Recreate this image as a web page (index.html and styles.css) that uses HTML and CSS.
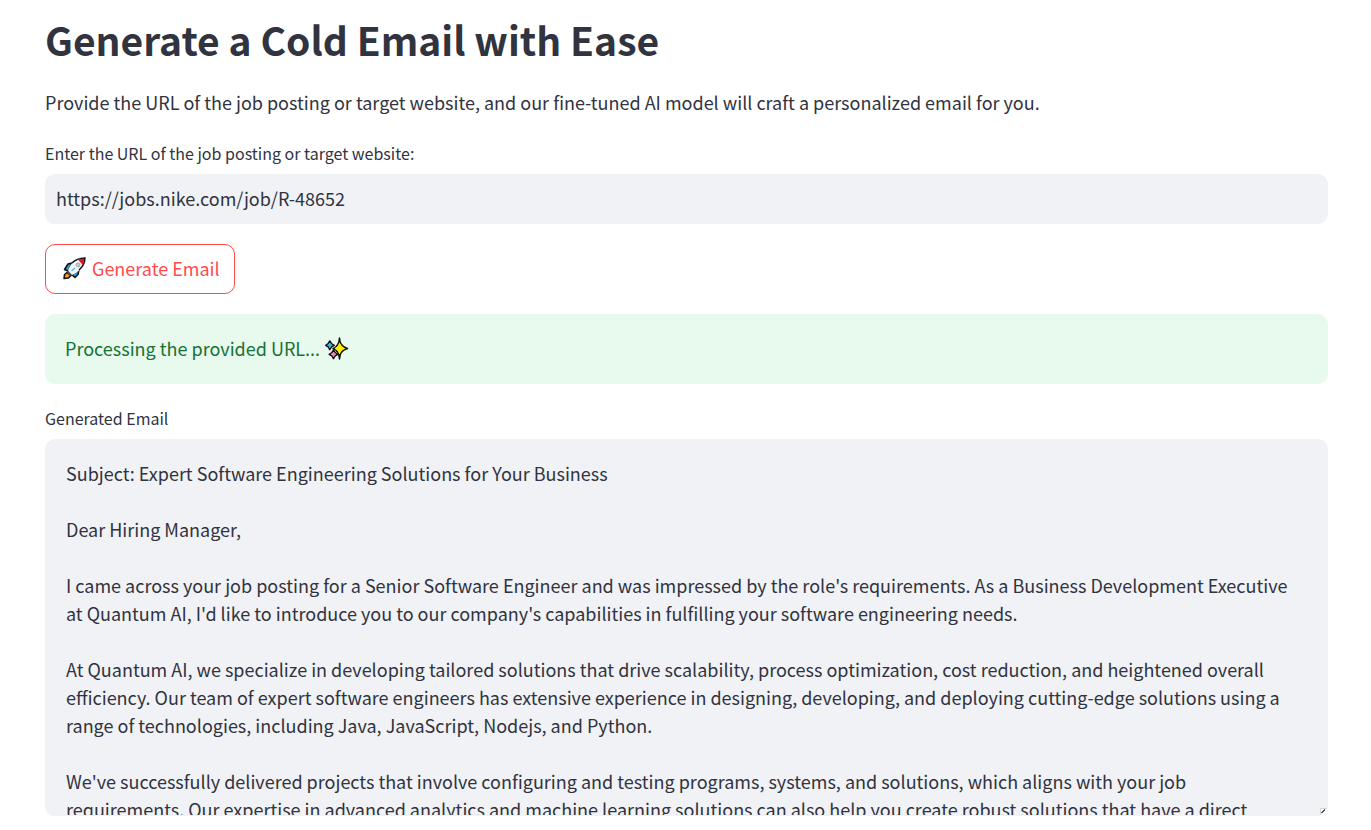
FILE: index.html
```html
<!DOCTYPE html>
<html lang="en">
<head>
<meta charset="utf-8">
<title>Generate a Cold Email with Ease</title>
<link rel="stylesheet" href="styles.css">
</head>
<body>
<main class="page">
  <h1 class="title">Generate a Cold Email with Ease</h1>
  <p class="intro">Provide the URL of the job posting or target website, and our fine-tuned AI model will craft a personalized email for you.</p>
  <div class="field">
    <label class="label" for="url">Enter the URL of the job posting or target website:</label>
    <input class="input" id="url" type="text" value="https://jobs.nike.com/job/R-48652">
  </div>
  <button class="button" type="button">
    <svg class="emoji" viewBox="0 0 24 24" aria-hidden="true">
      <path d="M5 16.500 L2.500 18.500 L2 22.500 L6.500 22 L9 19.500Z" fill="#f7941d" stroke="#111" stroke-width="1.500" stroke-linejoin="round"/>
      <path d="M10 7 L6 8 L2.500 13.500 L6 15Z M17 13.500 L16 18.500 L13 21.500 L10 19Z" fill="#1ba1e2" stroke="#111" stroke-width="1.500" stroke-linejoin="round"/>
      <path d="M6 14.500 C8 8 13 2.500 23 2 C22.500 10 17 16 10 19Z" fill="#f4f8fb"/>
      <path d="M10 7 C13 4 17 2.200 23 2 C22.800 7 20.500 11 17 14" stroke="#111" stroke-width="1.500" stroke-linejoin="round"/>
      <path d="M16 3.600 Q19 2.700 22.300 2.700 Q22 6.500 20.700 9Z" fill="#e81224"/>
      <path d="M6 14.500 L10 19 L7.500 20 L5 16.500Z" fill="#444"/>
      <path d="M9.500 15 L13 12" stroke="#45b5e8" stroke-width="1.200"/>
      <circle cx="16" cy="9" r="2" fill="#c8cdd0" stroke="#a4a9ac" stroke-width="1"/>
    </svg>
    <span>Generate Email</span>
  </button>
  <div class="alert" role="status">
    <span>Processing the provided URL...</span>
    <svg class="emoji" viewBox="0 0 24 24" aria-hidden="true">
      <g stroke="#111" stroke-width="1.500" stroke-linejoin="round">
        <path d="M14.500 2 Q14.800 10.500 22.500 12.500 Q14.800 14.500 14.500 23 Q14 14.500 8 12.500 Q14 10.500 14.500 2Z" fill="#ffed00"/>
        <path d="M4.800 5 L6.400 7.700 L9.200 9.300 L6.400 10.900 L4.800 13.600 L3.200 10.900 L.8 9.300 L3.200 7.700Z" fill="#35c2f1"/>
        <path d="M8.500 14 L10.100 16.700 L12.800 18.300 L10.100 19.900 L8.500 22.600 L6.900 19.900 L4.200 18.300 L6.900 16.700Z" fill="#f589b8"/>
      </g>
      <path d="M14.500 7.500 Q15.500 11.800 19.500 12.500 Q15.500 13.200 14.500 17.500 Q13.500 13.200 10 12.500 Q13.500 11.800 14.500 7.500Z" fill="#ffed00" stroke="#ffed00" stroke-width="1"/>
      <path d="M4.800 7 V11.600 M2.700 9.300 H7" stroke="#35c2f1" stroke-width="1.500"/>
      <path d="M8.500 16 V20.600 M6.300 18.300 H10.700" stroke="#f589b8" stroke-width="1.500"/>
    </svg>
  </div>
  <div class="field">
    <label class="label" for="email">Generated Email</label>
    <textarea class="textarea" id="email" rows="12">Subject: Expert Software Engineering Solutions for Your Business

Dear Hiring Manager,

I came across your job posting for a Senior Software Engineer and was impressed by the role's requirements. As a Business Development Executive at Quantum AI, I'd like to introduce you to our company's capabilities in fulfilling your software engineering needs.

At Quantum AI, we specialize in developing tailored solutions that drive scalability, process optimization, cost reduction, and heightened overall efficiency. Our team of expert software engineers has extensive experience in designing, developing, and deploying cutting-edge solutions using a range of technologies, including Java, JavaScript, Nodejs, and Python.

We've successfully delivered projects that involve configuring and testing programs, systems, and solutions, which aligns with your job requirements. Our expertise in advanced analytics and machine learning solutions can also help you create robust solutions that have a direct</textarea>
  </div>
</main>
</body>
</html>
```

FILE: styles.css
```css
* {
  box-sizing: border-box;
}

body {
  margin: 0;
  background: #fff;
  color: #31333f;
  font-family: "Source Sans Pro", "Noto Sans CJK SC", "Noto Sans", sans-serif;
  font-size: 18px;
  line-height: 28px;
}

.page {
  display: flex;
  flex-direction: column;
  align-items: stretch;
  gap: 20px;
  padding: 14px 43px 14px 45px;
}

.title {
  margin: 0;
  padding-bottom: 4px;
  font-size: 39px;
  font-weight: 600;
  line-height: 50px;
}

.intro {
  margin: 0;
  padding-bottom: 3px;
}

.field {
  display: flex;
  flex-direction: column;
}

.label {
  padding-bottom: 7px;
  font-size: 16px;
  line-height: 28px;
}

.input,
.textarea {
  width: 100%;
  margin: 0;
  border: 1px solid #f0f2f6;
  border-radius: 10px;
  background: #f0f2f6;
  color: inherit;
  font: inherit;
  outline: none;
}

.input {
  height: 50px;
  padding: 0 10px 2px;
}

.textarea {
  padding: 19px 20px 20px;
  overflow: hidden;
  resize: vertical;
}

.textarea::-webkit-resizer {
  background:
    linear-gradient(135deg, transparent 45%, #555 45%, #555 65%, transparent 65%) right 2px bottom 2px / 4px 4px no-repeat,
    linear-gradient(#fff, #fff) right bottom / 6px 6px no-repeat,
    linear-gradient(#d5d5d5, #d5d5d5) right bottom / 7px 7px no-repeat;
}

.button {
  display: flex;
  align-self: flex-start;
  align-items: center;
  gap: 6px;
  padding: 9px 14px 11px 16px;
  border: 1px solid #ff4b4b;
  border-radius: 10px;
  background: #fff;
  color: #ff4b4b;
  font: inherit;
}

.emoji {
  width: 24px;
  height: 24px;
  flex: none;
  fill: none;
}

.alert {
  display: flex;
  align-items: center;
  gap: 5px;
  padding: 20px 20px 22px;
  border-radius: 10px;
  background: #e8f9ee;
  color: #177233;
}
```
